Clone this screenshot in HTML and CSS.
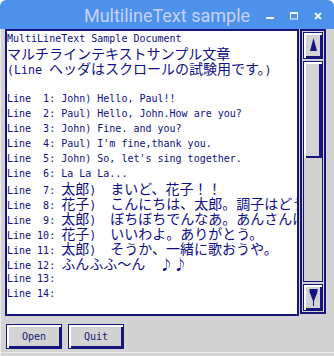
FILE: index.html
```html
<!DOCTYPE html>
<html lang="en">
<head>
    <meta charset="UTF-8">
    <meta name="viewport" content="width=device-width, initial-scale=1.0">
    <title>MultilineText sample</title>
    <link rel="stylesheet" href="styles.css">
</head>
<body>
  <div class="window">
    <div class="titlebar">
      <div class="title">MultilineText sample</div>
      <div class="controls">
        <svg width="70" height="29" viewBox="0 0 70 29">
          <rect x="2" y="17" width="8" height="2" fill="#f2f5ff"/>
          <rect x="26.5" y="12.5" width="7" height="6.5" fill="none" stroke="#f2f5ff" stroke-width="1"/>
          <rect x="26" y="12" width="8" height="2" fill="#f2f5ff"/>
          <path d="M51 13 L57 19 M57 13 L51 19" stroke="#f2f5ff" stroke-width="2"/>
        </svg>
      </div>
    </div>

    <div class="main">
      <div class="textarea">
        <div class="ln">MultiLineText Sample Document</div>
        <div class="ln"><span class="jp">マルチラインテキストサンプル文章</span></div>
        <div class="ln"><span class="wa">(Line </span><span class="jp">ヘッダはスクロールの試験用です。</span><span class="wa">)</span></div>
        <div class="ln"></div>
        <div class="ln">Line  1: John) Hello, Paul!!</div>
        <div class="ln">Line  2: Paul) Hello, John.How are you?</div>
        <div class="ln">Line  3: John) Fine. and you?</div>
        <div class="ln">Line  4: Paul) I'm fine,thank you.</div>
        <div class="ln">Line  5: John) So, let's sing together.</div>
        <div class="ln">Line  6: La La La...</div>
        <div class="ln">Line  7: <span class="jp">太郎</span><span class="wa">)</span><span class="jp">　まいど、花子！！</span></div>
        <div class="ln">Line  8: <span class="jp">花子</span><span class="wa">)</span><span class="jp">　こんにちは、太郎。調子はどうだい？</span></div>
        <div class="ln">Line  9: <span class="jp">太郎</span><span class="wa">)</span><span class="jp">　ぼちぼちでんなあ。あんさんは？</span></div>
        <div class="ln">Line 10: <span class="jp">花子</span><span class="wa">)</span><span class="jp">　いいわよ。ありがとう。</span></div>
        <div class="ln">Line 11: <span class="jp">太郎</span><span class="wa">)</span><span class="jp">　そうか、一緒に歌おうや。</span></div>
        <div class="ln">Line 12: <span class="jp">ふんふふ～ん　♪♪</span></div>
        <div class="ln">Line 13:</div>
        <div class="ln">Line 14:</div>
      </div>

      <div class="scroll">
        <div class="sbtn">
          <svg width="9" height="15" viewBox="0 0 9 15"><path d="M4.5 0 L8 13 L1 13 Z" fill="#15157d"/></svg>
        </div>
        <div class="trough">
          <div class="thumb"></div>
        </div>
        <div class="sbtn">
          <svg width="9" height="17" viewBox="0 0 9 17"><path d="M0.5 0 L8.5 0 L8.5 3 L5 12 L5 17 L4 17 L4 12 L0.5 3 Z" fill="#15157d"/></svg>
        </div>
      </div>
    </div>

    <div class="buttons">
      <button class="btn">Open</button>
      <button class="btn">Quit</button>
    </div>
  </div>
</body>
</html>
```

FILE: styles.css
```css
body {
  margin: 0;
  background: #ffffff;
}
.window {
  width: 334px;
  height: 356px;
  background: #d3d3d3;
  overflow: hidden;
  border-radius: 6px 6px 0 0;
  box-shadow: inset 1px 0 0 #ececec, inset 0 -3px 0 #d3d3d3, inset 0 -4px 0 #ececec;
}
.titlebar {
  position: relative;
  height: 29px;
  background: #4c92ea;
  border-radius: 6px 6px 0 0;
}
.title {
  text-align: center;
  font-family: Roboto, "Noto Sans", sans-serif;
  font-size: 18px;
  line-height: 27px;
  padding-top: 2px;
  color: #c9d0ff;
}
.controls {
  position: absolute;
  top: 0;
  left: 264px;
}
.controls svg {
  display: block;
}

.main {
  display: flex;
  gap: 1px;
  padding-left: 5px;
}
.textarea {
  box-sizing: border-box;
  width: 294px;
  height: 287px;
  background: #ffffff;
  border: 2px solid #15157d;
  overflow: hidden;
  font-family: "DejaVu Sans Mono", monospace;
  font-size: 10px;
  color: #0e0e86;
}
.ln {
  height: 15px;
  line-height: 15px;
  white-space: pre;
}
.jp {
  font-family: "Noto Sans CJK JP", sans-serif;
  font-size: 14px;
  line-height: 15px;
}
.wa {
  font-family: "DejaVu Sans Mono", monospace;
  font-size: 11.6px;
  line-height: 15px;
}

.scroll {
  box-sizing: border-box;
  width: 26px;
  height: 285px;
  border: 2px solid #15157d;
  padding: 1px;
  display: flex;
  flex-direction: column;
  gap: 2px;
}
.sbtn {
  box-sizing: border-box;
  height: 27px;
  flex: none;
  border: 1px solid #15157d;
  box-shadow: inset 2px 2px 0 #ffffff, inset -2px -2px 0 #15157d;
  display: flex;
  align-items: center;
  justify-content: center;
}
.sbtn svg {
  display: block;
}
.trough {
  box-sizing: border-box;
  flex: 1;
  border: 1px solid #15157d;
}
.thumb {
  box-sizing: border-box;
  height: 96px;
  box-shadow: inset 2px 2px 0 #ffffff, inset -3px -2px 0 #15157d;
}

.buttons {
  display: flex;
  gap: 6px;
  padding: 8px 0 0 6px;
}
.btn {
  box-sizing: border-box;
  width: 56px;
  height: 25px;
  margin: 0;
  padding: 0;
  background: #d3d3d3;
  border: 1px solid #15157d;
  box-shadow: inset 2px 2px 0 #ffffff, inset -2px -2px 0 #15157d;
  font-family: "DejaVu Sans Mono", monospace;
  font-size: 10px;
  color: #15157d;
}
```
